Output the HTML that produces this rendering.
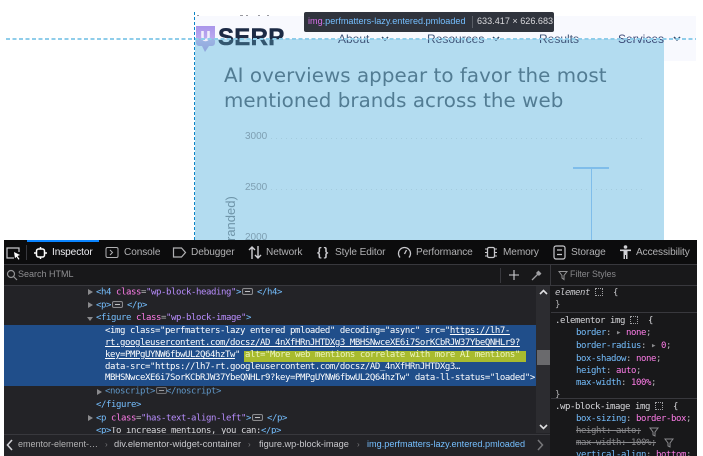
<!DOCTYPE html>
<html><head><meta charset="utf-8"><style>
*{box-sizing:border-box}
html,body{margin:0;padding:0;background:#fff;width:703px;height:456px;overflow:hidden}
body{position:relative;font-family:"Liberation Sans",sans-serif}
.a{position:absolute;white-space:pre;line-height:1}
.m{font-family:"DejaVu Sans Mono","Liberation Mono",monospace;font-size:9px;color:#b1b1b3;letter-spacing:-.42px}
.t{font-size:10.1px;color:#b1b1b3;top:248px;letter-spacing:-.1px}
.tag{color:#75bfff}.at{color:#ff7de9}.val{color:#b98eff}
.w{color:#fff}.lb{color:#75bfff}.pk{color:#ff7de9}
.more{display:inline-block;width:11px;height:7px;border:1px solid #8a8a8d;border-radius:2px;background:linear-gradient(#c0c0c2,#c0c0c2) center/5px 1px no-repeat #2b2b30;vertical-align:-0.5px;margin:0 -1px 0 1px}
.tri{position:absolute;width:0;height:0;border-left:5px solid #8a8a8d;border-top:3px solid transparent;border-bottom:3px solid transparent}
.s{color:#8a8a8d;text-decoration:line-through}
.bx{display:inline-block;width:8px;height:8px;border:1px dotted #a0a0a3;vertical-align:-1px}
.h{font-family:'DejaVu Sans',sans-serif;font-size:19.85px;color:#527c93;letter-spacing:.05px}
.d{position:absolute;top:15px;height:1px;background:#9a9aa0}
</style></head><body>
<!-- page -->
<div class="d" style="left:197px;width:2px"></div><div class="d" style="left:240px;width:3px"></div><div class="d" style="left:246px;width:2px"></div><div class="d" style="left:258px;width:2px"></div><div class="d" style="left:267px;width:2px"></div>
<div class="a" style="left:195px;top:16px;width:501px;height:45px;background:#f8f9fe"></div>
<div class="a" style="left:195px;top:39px;width:469px;height:201px;background:#b3dcf0"></div>
<svg class="a" style="left:196px;top:26px" width="20" height="27" viewBox="0 0 20 27"><defs><linearGradient id="lg" x1="0" y1="0" x2="0" y2="1"><stop offset="0" stop-color="#a995ea"/><stop offset=".48" stop-color="#bba9f0"/><stop offset=".5" stop-color="#9db5e4"/><stop offset="1" stop-color="#8fa5dc"/></linearGradient></defs><path d="M0 0h19v17a3 3 0 0 1-3 3h-3l-4 6-3-6H3a3 3 0 0 1-3-3z" fill="url(#lg)"/><path d="M6.500 5v6a3 3 0 0 0 6 0V5" fill="none" stroke="#f1eefb" stroke-width="2.600"/></svg>
<div class="a" style="left:218px;top:25px;font-size:24px;font-weight:bold;color:#1c2a45;letter-spacing:.3px;line-height:26px;-webkit-text-stroke:.5px #1c2a45">SERP</div>
<div class="a" style="left:217px;top:25px;width:71px;height:26px;clip-path:inset(14px 0 0 0);padding-left:1px;font-size:24px;font-weight:bold;color:#33566f;letter-spacing:.3px;line-height:26px;background:#b3dcf0;-webkit-text-stroke:.5px #33566f">SERP</div>
<div class="a" style="left:338px;top:33px;font-size:12px;color:#40567a">About</div>
<div class="a" style="left:427px;top:33px;font-size:12px;color:#40567a">Resources</div>
<div class="a" style="left:539px;top:33px;font-size:12px;color:#40567a">Results</div>
<div class="a" style="left:618px;top:33px;font-size:12px;color:#3b4a78">Services</div>
<svg class="a" style="left:381px;top:36px" width="305" height="7" viewBox="0 0 305 7" fill="none" stroke="#2f4a6a" stroke-width="1.500"><path d="M1 1l3 3 3-3M112 1l3 3 3-3M293 1l3 3 3-3"/></svg>
<div class="a h" style="left:224px;top:66px">AI overviews appear to favor the most</div>
<div class="a h" style="left:224px;top:91px">mentioned brands across the web</div>
<div class="a" style="left:245px;top:132px;font-size:10px;color:#7e9fb2">3000</div>
<div class="a" style="left:245px;top:183px;font-size:10px;color:#7e9fb2">2500</div>
<div class="a" style="left:245px;top:233px;font-size:10px;color:#7e9fb2">2000</div>
<div class="a" style="left:271px;top:138px;width:375px;height:1px;background:repeating-linear-gradient(90deg,#a3cbdd 0 1px,transparent 1px 5px)"></div>
<div class="a" style="left:271px;top:189px;width:375px;height:1px;background:repeating-linear-gradient(90deg,#a3cbdd 0 1px,transparent 1px 5px)"></div>
<div class="a" style="left:573px;top:167px;width:36px;height:2px;background:#7fbdea"></div>
<div class="a" style="left:591px;top:168px;width:1px;height:72px;background:#7fbdea"></div>
<div class="a" style="left:224px;top:241px;font-size:13px;color:#6f95a9;transform-origin:0 0;transform:rotate(-90deg)">randed)</div>
<!-- guides -->
<div class="a" style="left:6px;top:38px;width:690px;height:2px;background:repeating-linear-gradient(90deg,#8fcdea 0 4px,transparent 4px 6.5px)"></div>
<div class="a" style="left:194px;top:12px;width:1px;height:228px;background:repeating-linear-gradient(180deg,#0a84c6 0 3px,transparent 3px 5px)"></div>
<!-- tooltip -->
<div class="a" style="left:304px;top:12px;width:250px;height:20px;background:#30343d;border-radius:2px"></div>
<div class="a" style="left:308px;top:17px;font-size:9.1px;color:#75bfff"><span style="color:#d66fe8">img</span>.perfmatters-lazy.entered.pmloaded</div>
<div class="a" style="left:472px;top:16px;width:1px;height:12px;background:#5a5e66"></div>
<div class="a" style="left:477px;top:17px;font-size:9.1px;color:#d7d7db">633.417 × 626.683</div>
<!-- devtools -->
<div class="a" style="left:4px;top:240px;width:693px;height:216px;background:#232327"></div>
<div class="a" style="left:4px;top:240px;width:693px;height:25px;background:#0c0c0d;border-bottom:1px solid #38383d"></div>
<div class="a" style="left:27px;top:240px;width:72px;height:2px;background:#0a84ff"></div>
<div class="a" style="left:4px;top:265px;width:693px;height:21px;background:#18181a;border-bottom:1px solid #38383d"></div>
<div class="a" style="left:4px;top:286px;width:532px;height:147px;background:#232327"></div>
<div class="a" style="left:550px;top:265px;width:1px;height:191px;background:#38383d"></div>
<div class="a" style="left:550px;top:286px;width:147px;height:170px;background:#18181a"></div>
<svg class="a" style="left:5px;top:245px" width="20" height="17" viewBox="0 0 20 17" fill="none" stroke="#c8c8cc" stroke-width="1.2"><path d="M9 13H2V3h12v4"/><path d="M9 7l6 3-2.500 1 2 3-1 .8-2-3-1.500 1.500z" fill="#fff" stroke="none"/></svg>
<div class="a" style="left:26px;top:245px;width:1px;height:15px;background:#38383d"></div>
<svg class="a" style="left:34px;top:246px" width="13" height="14" viewBox="0 0 13 14" fill="none" stroke="#fff" stroke-width="1.5"><rect x="2.500" y="3" width="8" height="8" rx="2"/><path d="M6.500 1v2M6.500 11v2M0 7h2.500M10.500 7H13"/></svg>
<div class="a t" style="left:52px;color:#f0f0f4">Inspector</div>
<svg class="a" style="left:105px;top:246px" width="14" height="13" viewBox="0 0 14 13" fill="none" stroke="#b1b1b3"><rect x="1" y="1.500" width="12" height="10" rx="1.500"/><path d="M5 4l2.500 2.500L5 9"/></svg>
<div class="a t" style="left:124px">Console</div>
<svg class="a" style="left:172px;top:246px" width="15" height="13" viewBox="0 0 15 13" fill="none" stroke="#b1b1b3" stroke-width="1.2"><path d="M1.500 2h8l4 4.500-4 4.500h-8z"/></svg>
<div class="a t" style="left:191px">Debugger</div>
<svg class="a" style="left:248px;top:245px" width="14" height="15" viewBox="0 0 14 15" fill="none" stroke="#d0d0d4" stroke-width="1.400"><path d="M4 14V2M1 5l3-3 3 3M10 1v12M7 10l3 3 3-3"/></svg>
<div class="a t" style="left:266px">Network</div>
<div class="a" style="left:317px;top:246px;font-size:12px;font-weight:bold;color:#c8c8cc;letter-spacing:2px">{}</div>
<div class="a t" style="left:335px">Style Editor</div>
<svg class="a" style="left:397px;top:246px" width="15" height="13" viewBox="0 0 15 13" fill="none" stroke="#c8c8cc" stroke-width="1.300"><path d="M3 11.500A6 6 0 1 1 12 11.500M7.500 8l2-4"/></svg>
<div class="a t" style="left:416px">Performance</div>
<svg class="a" style="left:484px;top:246px" width="14" height="13" viewBox="0 0 14 13" fill="none" stroke="#c8c8cc"><rect x="3.500" y="1.500" width="7" height="10" rx="1.500" stroke-width="1.300"/><path d="M1 3h2M1 6.500h2M1 10h2M11 3h2M11 6.500h2M11 10h2"/></svg>
<div class="a t" style="left:503px">Memory</div>
<svg class="a" style="left:553px;top:245px" width="13" height="15" viewBox="0 0 13 15" fill="none" stroke="#c8c8cc" stroke-width="1.200"><rect x="1" y="1" width="11" height="13" rx="2"/><path d="M4 5h5M4 9.500h5"/></svg>
<div class="a t" style="left:571px">Storage</div>
<svg class="a" style="left:619px;top:245px" width="13" height="15" viewBox="0 0 13 15" fill="#d0d0d4"><circle cx="6.500" cy="2" r="1.800"/><path d="M1 4.500h11v1.600H8.500V14H7V10H6v4H4.500V6.100H1z"/></svg>
<div class="a t" style="left:636px">Accessibility</div>
<svg class="a" style="left:6px;top:269px" width="12" height="12" viewBox="0 0 12 12" fill="none" stroke="#939395" stroke-width="1.200"><circle cx="5" cy="5" r="3.500"/><path d="M7.500 7.500L11 11"/></svg>
<div class="a" style="left:18px;top:270px;font-size:9px;color:#8f8f92">Search HTML</div>
<div class="a" style="left:500px;top:268px;width:1px;height:15px;background:#38383d"></div>
<svg class="a" style="left:508px;top:269px" width="12" height="12" viewBox="0 0 12 12" stroke="#d0d0d4" stroke-width="1.100"><path d="M6 1v10M1 6h10"/></svg>
<svg class="a" style="left:530px;top:269px" width="13" height="13" viewBox="0 0 13 13" fill="none" stroke="#a0a0a3" stroke-width="1.300"><path d="M2 11l6-6M8 2l3 3" /><path d="M7 3l3 3" stroke-width="3"/></svg>
<svg class="a" style="left:558px;top:270px" width="10" height="11" viewBox="0 0 10 11" fill="none" stroke="#939395"><path d="M1 1.500h8L6 5.500v4L4 8V5.500z"/></svg>
<div class="a" style="left:570px;top:270px;font-size:8.8px;color:#88888b">Filter Styles</div>
<!-- markup -->
<div class="tri" style="left:88px;top:289px"></div>
<div class="a m" style="left:96px;top:288px"><span class="tag">&lt;h4</span> <span class="at">class</span>=<span class="val">"wp-block-heading"</span><span class="tag">&gt;</span><span class="more"></span> <span class="tag">&lt;/h4&gt;</span></div>
<div class="tri" style="left:88px;top:302px"></div>
<div class="a m" style="left:96px;top:301px"><span class="tag">&lt;p&gt;</span><span class="more"></span> <span class="tag">&lt;/p&gt;</span></div>
<div class="a" style="left:87px;top:317px;width:0;height:0;border-top:4px solid #8a8a8d;border-left:3px solid transparent;border-right:3px solid transparent"></div>
<div class="a m" style="left:96px;top:314px"><span class="tag">&lt;figure</span> <span class="at">class</span>=<span class="val">"wp-block-image"</span><span class="tag">&gt;</span></div>
<div class="a" style="left:4px;top:325px;width:532px;height:61px;background:#204e8a"></div>
<div class="a" style="left:244px;top:351px;width:282px;height:11px;background:#a8bb2e"></div>
<div class="a m w" style="left:105px;top:327px">&lt;img class="perfmatters-lazy entered pmloaded" decoding="async" src="<u>https://lh7-</u></div>
<div class="a m w" style="left:105px;top:339px"><u>rt.googleusercontent.com/docsz/AD_4nXfHRnJHTDXg3_MBHSNwceXE6i7SorKCbRJW37YbeQNHLr9?</u></div>
<div class="a m w" style="left:105px;top:351px"><u>key=PMPgUYNW6fbwUL2Q64hzTw</u>" <span style="color:#eef5c0">alt="More web mentions correlate with more AI mentions"</span></div>
<div class="a m w" style="left:105px;top:363px">data-src="https://lh7-rt.googleusercontent.com/docsz/AD_4nXfHRnJHTDXg3…</div>
<div class="a m w" style="left:105px;top:374px">MBHSNwceXE6i7SorKCbRJW37YbeQNHLr9?key=PMPgUYNW6fbwUL2Q64hzTw" data-ll-status="loaded"&gt;</div>
<div class="tri" style="left:97px;top:389px"></div>
<div class="a m" style="left:105px;top:387px;opacity:.75"><span class="tag">&lt;noscript&gt;</span><span class="more"></span><span class="tag">&lt;/noscript&gt;</span></div>
<div class="a m" style="left:96px;top:401px"><span class="tag">&lt;/figure&gt;</span></div>
<div class="tri" style="left:88px;top:415px"></div>
<div class="a m" style="left:96px;top:414px"><span class="tag">&lt;p</span> <span class="at">class</span>=<span class="val">"has-text-align-left"</span><span class="tag">&gt;</span><span class="more"></span> <span class="tag">&lt;/p&gt;</span></div>
<div class="a m" style="left:96px;top:427px;height:7px;overflow:hidden;line-height:9px"><span class="tag">&lt;p&gt;</span><span style="color:#d7d7db">To increase mentions, you can:</span><span class="tag">&lt;/p&gt;</span></div>
<!-- scrollbar -->
<div class="a" style="left:536px;top:286px;width:14px;height:147px;background:#2c2c30"></div>
<div class="a" style="left:537px;top:350px;width:13px;height:15px;background:#6a6a6d"></div>
<svg class="a" style="left:539px;top:289px" width="9" height="6" viewBox="0 0 9 6" fill="none" stroke="#e0e0e2" stroke-width="1.600"><path d="M1 5l3.500-3.500L8 5"/></svg>
<svg class="a" style="left:539px;top:424px" width="9" height="6" viewBox="0 0 9 6" fill="none" stroke="#e0e0e2" stroke-width="1.600"><path d="M1 1l3.500 3.500L8 1"/></svg>
<!-- breadcrumb -->
<div class="a" style="left:4px;top:434px;width:546px;height:22px;background:#232327;border-top:1px solid #38383d"></div>
<svg class="a" style="left:6px;top:439px" width="8" height="12" viewBox="0 0 8 12" fill="none" stroke="#d0d0d4" stroke-width="1.600"><path d="M6 1L1.500 6 6 11"/></svg>
<div class="a" style="left:18px;top:440px;font-size:9px;color:#b1b1b3">ementor-element-…</div>
<div class="a" style="left:105px;top:441px;font-size:8px;color:#77777a">›</div>
<div class="a" style="left:114px;top:440px;font-size:9.35px;color:#c8c8cc">div.elementor-widget-container</div>
<div class="a" style="left:248px;top:441px;font-size:8px;color:#77777a">›</div>
<div class="a" style="left:259px;top:440px;font-size:9.2px;color:#c8c8cc">figure.wp-block-image</div>
<div class="a" style="left:357px;top:441px;font-size:8px;color:#77777a">›</div>
<div class="a" style="left:367px;top:440px;font-size:9.15px;color:#75bfff">img.perfmatters-lazy.entered.pmloaded</div>
<svg class="a" style="left:536px;top:439px" width="8" height="12" viewBox="0 0 8 12" fill="none" stroke="#77777a" stroke-width="1.500"><path d="M2 1l4.500 5L2 11"/></svg>
<!-- rules -->
<div class="a m" style="left:555px;top:288px;font-style:italic;color:#c8c8cc">element <span class="bx"></span>  <span style="font-style:normal">{</span></div>
<div class="a m" style="left:555px;top:301px">}</div>
<div class="a" style="left:551px;top:312px;width:146px;height:1px;background:#38383d"></div>
<div class="a m" style="left:555px;top:316px;color:#d7d7db">.elementor img <span class="bx"></span>  {</div>
<div class="a m" style="left:576px;top:329px"><span class="lb">border</span>: <span style="color:#8a8a8d">▸</span> <span class="pk">none</span>;</div>
<div class="a m" style="left:576px;top:342px"><span class="lb">border-radius</span>: <span style="color:#8a8a8d">▸</span> <span class="pk">0</span>;</div>
<div class="a m" style="left:576px;top:355px"><span class="lb">box-shadow</span>: <span class="pk">none</span>;</div>
<div class="a m" style="left:576px;top:367px"><span class="lb">height</span>: <span class="pk">auto</span>;</div>
<div class="a m" style="left:576px;top:379px"><span class="lb">max-width</span>: <span class="pk">100%</span>;</div>
<div class="a m" style="left:555px;top:391px">}</div>
<div class="a" style="left:551px;top:398px;width:146px;height:1px;background:#38383d"></div>
<div class="a m" style="left:555px;top:402px;color:#d7d7db">.wp-block-image img <span class="bx"></span>  {</div>
<div class="a m" style="left:576px;top:415px"><span class="lb">box-sizing</span>: <span class="pk">border-box</span>;</div>
<div class="a m" style="left:576px;top:427px"><span class="s">height: auto;</span></div>
<div class="a m" style="left:576px;top:439px"><span class="s">max-width: 100%;</span></div>
<div class="a m" style="left:576px;top:451px"><span class="lb">vertical-align</span>: <span class="pk">bottom</span>;</div>
<svg class="a" style="left:649px;top:427px" width="30" height="24" viewBox="0 0 30 24" fill="none" stroke="#8a8a8d"><path d="M1 1h8L6 5v4L4 8V5zM16 12h8l-3 4v4l-2-1v-3z"/></svg>
</body></html>
